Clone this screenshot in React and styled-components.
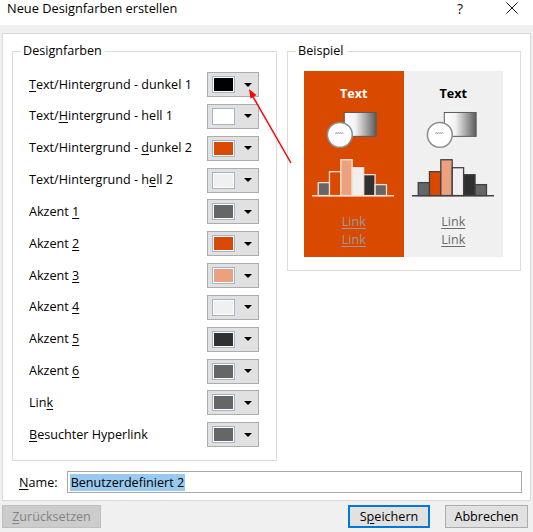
import React from "react"
import styled, { createGlobalStyle } from "styled-components"

// -----------------------------------------------------------------------------
// Data
// -----------------------------------------------------------------------------

const ORANGE = "#d94a00"

const themeColors = [
  { pre: "", key: "T", post: "ext/Hintergrund - dunkel 1", color: "#000000" },
  { pre: "Text/", key: "H", post: "intergrund - hell 1", color: "#ffffff" },
  { pre: "Text/Hintergrund - ", key: "d", post: "unkel 2", color: ORANGE },
  { pre: "Text/Hintergrund - h", key: "e", post: "ll 2", color: "#f0f0f0" },
  { pre: "Akzent ", key: "1", post: "", color: "#666666" },
  { pre: "Akzent ", key: "2", post: "", color: ORANGE },
  { pre: "Akzent ", key: "3", post: "", color: "#eda07e" },
  { pre: "Akzent ", key: "4", post: "", color: "#f0f0f0" },
  { pre: "Akzent ", key: "5", post: "", color: "#303030" },
  { pre: "Akzent ", key: "6", post: "", color: "#666666" },
  { pre: "Lin", key: "k", post: "", color: "#666666" },
  { pre: "", key: "B", post: "esuchter Hyperlink", color: "#666666" },
]

const bars = [
  { x: 14.3, top: 74, fill: "#666666" },
  { x: 25.6, top: 63, fill: ORANGE },
  { x: 37, top: 51, fill: "#eda07e" },
  { x: 48.5, top: 59, fill: "#efefef" },
  { x: 60, top: 66, fill: "#303030" },
  { x: 71.5, top: 76, fill: "#666666" },
]

// -----------------------------------------------------------------------------
// Styles
// -----------------------------------------------------------------------------

const GlobalStyle = createGlobalStyle`
  html, body {
    margin: 0;
    padding: 0;
  }
  body {
    width: 533px;
    height: 532px;
    overflow: hidden;
    background: #f0f0f0;
    font-family: "Open Sans", "Noto Sans", sans-serif;
    font-size: 12.6px;
    color: #000;
  }
  * {
    box-sizing: border-box;
  }
`

const Dialog = styled.div`
  position: relative;
  width: 533px;
  height: 532px;
  display: flex;
  flex-direction: column;
`

const TitleBar = styled.div`
  height: 25px;
  background: #ffffff;
  display: flex;
  align-items: flex-start;
  padding-left: 7px;
`

const Title = styled.div`
  line-height: 17px;
  font-size: 12.8px;
`

const HelpMark = styled.div`
  margin-left: auto;
  font-size: 14px;
  line-height: 17px;
  color: #111;
`

const CloseMark = styled.div`
  width: 12px;
  height: 12px;
  margin: 2px 15px 0 43px;
  display: flex;
`

const MainPanel = styled.div`
  margin: 8px 0 0 2px;
  width: 529px;
  height: 468px;
  background: #ffffff;
  border: 1px solid #dadada;
  padding: 9px 8px 5px 9px;
  display: flex;
  flex-direction: column;
`

const GroupsRow = styled.div`
  display: flex;
  align-items: flex-start;
  gap: 10px;
`

const Group = styled.fieldset`
  margin: 0;
  padding: 0;
  min-width: 0;
  width: ${({ width }) => width}px;
  border: 1px solid #dcdcdc;
`

const Legend = styled.legend`
  margin-left: 8px;
  padding: 0 3px 0 2px;
  line-height: 16px;
`

const RowList = styled.div`
  display: flex;
  flex-direction: column;
  gap: 6.85px;
  padding: 13px 17px 13px 16px;
`

const Row = styled.div`
  height: 25px;
  display: flex;
  align-items: center;
  justify-content: space-between;
`

const Label = styled.span`
  line-height: 16px;
`

const Key = styled.span`
  text-decoration: underline;
  text-underline-offset: 2px;
`

const ColorButton = styled.button`
  width: 52px;
  height: 25px;
  padding: 0 0 0 4px;
  display: flex;
  align-items: center;
  background: #e1e1e1;
  border: 1px solid #adadad;
  border-radius: 0;
`

const Swatch = styled.span`
  width: 23px;
  height: 17px;
  border: 1px solid #9fb6d0;
  box-shadow: inset 0 0 0 1px #ffffff;
  background: ${({ color }) => color};
`

const DropArrow = styled.span`
  margin-left: 9px;
  width: 0;
  height: 0;
  border-left: 4px solid transparent;
  border-right: 4px solid transparent;
  border-top: 4px solid #000;
`

const PreviewBox = styled.div`
  display: flex;
  width: 199px;
  height: 186px;
  margin: 12px 0 13px 16px;
`

const PreviewPanel = styled.div`
  flex: 1;
  display: flex;
  flex-direction: column;
  align-items: center;
  padding-top: 15px;
  background: ${({ bg }) => bg};
`

const PreviewText = styled.div`
  font-weight: 700;
  line-height: 16px;
  color: ${({ color }) => color};
`

const Graphic = styled.svg`
  display: block;
  margin-top: 7px;
  align-self: stretch;
`

const LinkList = styled.div`
  margin-top: 12px;
  display: flex;
  flex-direction: column;
  align-items: center;
`

const PreviewLink = styled.span`
  line-height: 18px;
  color: ${({ color }) => color};
  text-decoration: underline;
  text-underline-offset: 2px;
`

const NameRow = styled.div`
  margin-top: 10px;
  display: flex;
  align-items: center;
  padding-left: 7px;
`

const NameLabel = styled.span`
  width: 48px;
`

const NameInput = styled.div`
  width: 459px;
  height: 22px;
  border: 1px solid #a9a9a9;
  padding-left: 2px;
  display: flex;
  align-items: center;
`

const Selected = styled.span`
  background: #99c9ef;
  line-height: 17px;
  padding: 0 1px;
`

const Footer = styled.div`
  display: flex;
  padding: 4px 5px 0 2px;
  gap: 15px;
`

const Button = styled.button`
  height: 23px;
  width: ${({ width }) => width}px;
  padding: 0;
  font-family: inherit;
  font-size: 12.6px;
  border-radius: 0;
  background: ${({ disabled }) => (disabled ? "#cccccc" : "#e1e1e1")};
  color: ${({ disabled }) => (disabled ? "#838383" : "#000")};
  border: ${({ primary, disabled }) =>
    primary ? "2px solid #0078d7" : disabled ? "1px solid #bfbfbf" : "1px solid #adadad"};
  &:first-child {
    margin-right: auto;
  }
`

const Overlay = styled.svg`
  position: absolute;
  left: 0;
  top: 0;
  pointer-events: none;
`

// -----------------------------------------------------------------------------
// Sub-components
// -----------------------------------------------------------------------------

const Sample = ({ id, bg, textColor, line, linkColor }) => (
  <PreviewPanel bg={bg}>
    <PreviewText color={textColor}>Text</PreviewText>
    <Graphic width="100%" height="92" viewBox="0 0 100 92" preserveAspectRatio="xMinYMin">
      <defs>
        <linearGradient id={id} x1="0" x2="1" y1="0" y2="0">
          <stop offset="0" stopColor="#ffffff" />
          <stop offset="0.35" stopColor="#f2f2f2" />
          <stop offset="1" stopColor="#5c5c5c" />
        </linearGradient>
      </defs>
      <rect x="40.5" y="3.5" width="32" height="24" fill={`url(#${id})`} stroke="#5a5a5a" strokeWidth="1" />
      <circle cx="36" cy="26" r="12.5" fill="#ffffff" stroke="#8c8c8c" strokeWidth="1.5" />
      <path
        d="M31.5 25 l1 -1.6 l1 1.6 l1 -1.6 l1 1.6 l1 -1.6 l1 1.6 l1 -1.6 l1 1.6"
        fill="none"
        stroke="#8a8a8a"
        strokeWidth="0.7"
      />
      {bars.map((b) => (
        <rect
          key={b.x}
          x={b.x}
          y={b.top}
          width="11.4"
          height={87 - b.top}
          fill={b.fill}
          stroke={line}
          strokeWidth="1.3"
        />
      ))}
      <line x1="8" x2="90.5" y1="87.3" y2="87.3" stroke={line} strokeWidth="1.5" />
    </Graphic>
    <LinkList>
      <PreviewLink color={linkColor}>Link</PreviewLink>
      <PreviewLink color={linkColor}>Link</PreviewLink>
    </LinkList>
  </PreviewPanel>
)

// -----------------------------------------------------------------------------
// Component
// -----------------------------------------------------------------------------

const App = () => (
  <Dialog>
    <GlobalStyle />
    <TitleBar>
      <Title>Neue Designfarben erstellen</Title>
      <HelpMark>?</HelpMark>
      <CloseMark>
        <svg width="12" height="12" viewBox="0 0 12 12">
          <path d="M0.5 0.5 L11.5 11.5 M11.5 0.5 L0.5 11.5" stroke="#111" strokeWidth="1" />
        </svg>
      </CloseMark>
    </TitleBar>

    <MainPanel>
      <GroupsRow>
        <Group width={265}>
          <Legend>Designfarben</Legend>
          <RowList>
            {themeColors.map((c) => (
              <Row key={c.pre + c.key + c.post}>
                <Label>
                  {c.pre}
                  <Key>{c.key}</Key>
                  {c.post}
                </Label>
                <ColorButton>
                  <Swatch color={c.color} />
                  <DropArrow />
                </ColorButton>
              </Row>
            ))}
          </RowList>
        </Group>

        <Group width={234}>
          <Legend>Beispiel</Legend>
          <PreviewBox>
            <Sample id="gradDark" bg={ORANGE} textColor="#ffffff" line="#f7e0d4" linkColor="#9a9a9a" />
            <Sample id="gradLight" bg="#f0f0f0" textColor="#000000" line="#404040" linkColor="#6a6a6a" />
          </PreviewBox>
        </Group>
      </GroupsRow>

      <NameRow>
        <NameLabel>
          <Key>N</Key>ame:
        </NameLabel>
        <NameInput>
          <Selected>Benutzerdefiniert 2</Selected>
        </NameInput>
      </NameRow>
    </MainPanel>

    <Footer>
      <Button width={99} disabled>
        <Key>Z</Key>urücksetzen
      </Button>
      <Button width={82} primary>
        S<Key>p</Key>eichern
      </Button>
      <Button width={83}>Abbrechen</Button>
    </Footer>

    <Overlay width="533" height="532" viewBox="0 0 533 532">
      <line x1="291" y1="163" x2="252" y2="95" stroke="#ff0000" strokeWidth="1.5" />
      <polygon points="249,89 256.5,95.1 250.5,98.6" fill="#ff0000" />
    </Overlay>
  </Dialog>
)

export default App
